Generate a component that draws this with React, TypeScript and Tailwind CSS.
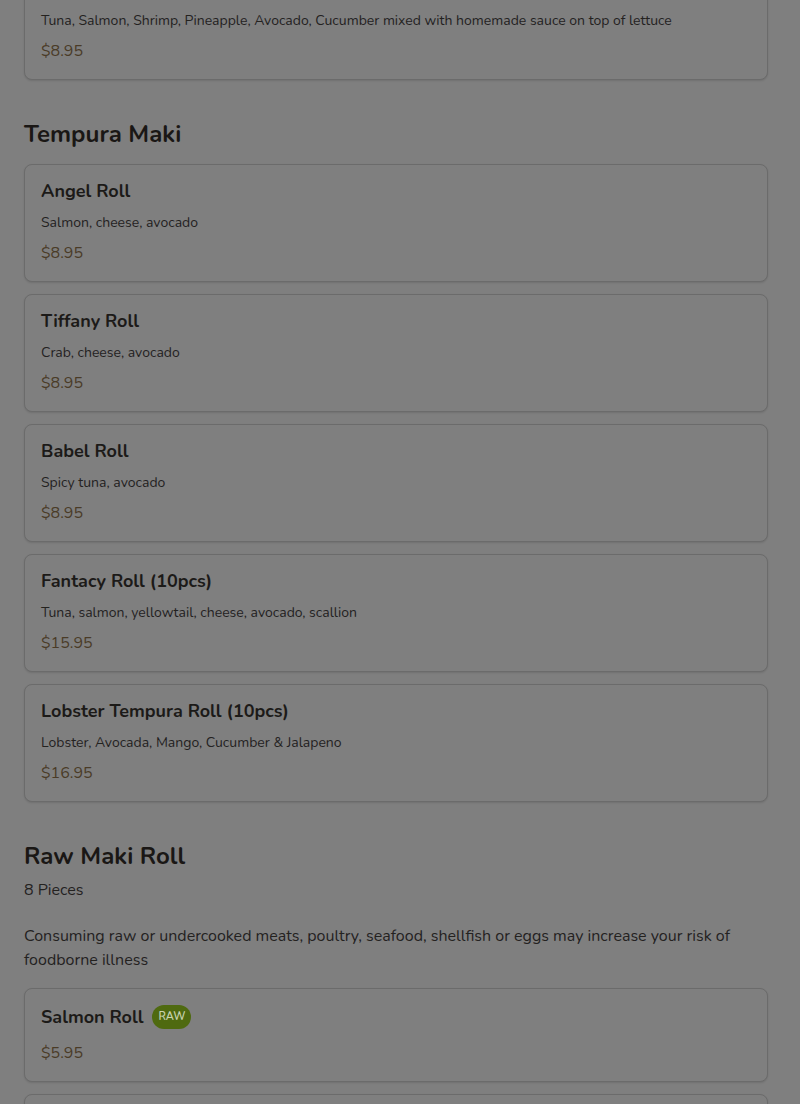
import React from "react";

type Item = { name: string; desc?: string; price: string; raw?: boolean };

function Card({ item }: { item: Item }) {
  return (
    <div className="rounded-lg border border-[#6b6b6b] bg-[#7f7f7f] p-4 shadow-[0_1px_2px_rgba(0,0,0,0.12)]">
      <div className="flex items-center gap-[9px]">
        <h3 className="text-[18px] font-bold leading-5 text-[#1c1a18]">{item.name}</h3>
        {item.raw && (
          <span className="flex h-6 items-center rounded-full bg-[#4f6a10] px-[6px] text-[11px] font-semibold text-[#c9d3b0]">RAW</span>
        )}
      </div>
      {item.desc && <p className="mt-3 text-[14px] leading-5 text-[#24221f]">{item.desc}</p>}
      <p className={`${item.desc ? "mt-2" : "mt-3"} text-[16px] leading-6 text-[#4a3b27]`}>{item.price}</p>
    </div>
  );
}

const tempura: Item[] = [
  { name: "Angel Roll", desc: "Salmon, cheese, avocado", price: "$8.95" },
  { name: "Tiffany Roll", desc: "Crab, cheese, avocado", price: "$8.95" },
  { name: "Babel Roll", desc: "Spicy tuna, avocado", price: "$8.95" },
  { name: "Fantacy Roll (10pcs)", desc: "Tuna, salmon, yellowtail, cheese, avocado, scallion", price: "$15.95" },
  { name: "Lobster Tempura Roll (10pcs)", desc: "Lobster, Avocada, Mango, Cucumber & Jalapeno", price: "$16.95" },
];

const raw: Item[] = [
  { name: "Salmon Roll", price: "$5.95", raw: true },
  { name: "Tuna Roll", price: "$5.95", raw: true },
];

export default function App() {
  return (
    <div
      className="h-[1104px] overflow-hidden bg-[#7f7f7f] pl-6 pr-8"
      style={{ fontFamily: "Nunito, 'Noto Sans', sans-serif" }}
    >
      <div className="-mt-[38px]">
        <Card
          item={{
            name: "Poke Salad",
            desc: "Tuna, Salmon, Shrimp, Pineapple, Avocado, Cucumber mixed with homemade sauce on top of lettuce",
            price: "$8.95",
          }}
        />
      </div>

      <h2 className="mt-[38px] text-[24px] font-bold leading-8 text-[#1a1715]">Tempura Maki</h2>
      <div className="mt-[14px] flex flex-col gap-3">
        {tempura.map((i) => (
          <Card key={i.name} item={i} />
        ))}
      </div>

      <h2 className="mt-[38px] text-[24px] font-bold leading-8 text-[#1a1715]">Raw Maki Roll</h2>
      <p className="mt-1.5 text-[16px] leading-6 text-[#24221f]">8 Pieces</p>
      <p className="mt-[22px] text-[16px] leading-6 text-[#24221f]">
        Consuming raw or undercooked meats, poultry, seafood, shellfish or eggs may increase your risk of foodborne illness
      </p>
      <div className="mt-4 flex flex-col gap-3">
        {raw.map((i) => (
          <Card key={i.name} item={i} />
        ))}
      </div>
    </div>
  );
}
